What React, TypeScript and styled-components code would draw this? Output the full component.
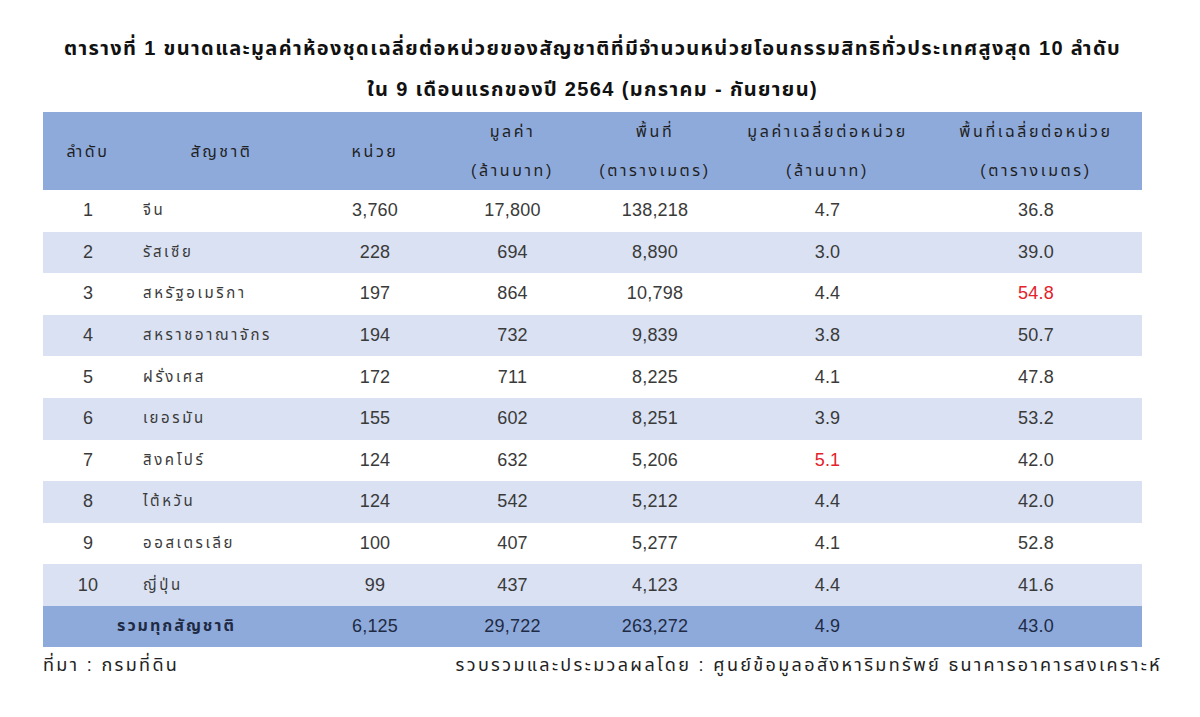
import React from "react";
import styled, { createGlobalStyle } from "styled-components";

const GlobalStyle = createGlobalStyle`
  html, body {
    margin: 0;
    padding: 0;
    background: #ffffff;
  }
  body {
    font-family: "Liberation Sans", "Noto Sans Thai", "DejaVu Sans", sans-serif;
    color: #333333;
  }
`;

interface Row {
  rank: number;
  name: string;
  units: string;
  value: string;
  area: string;
  avgValue: string;
  avgArea: string;
  hotValue?: boolean;
  hotArea?: boolean;
}

const rows: Row[] = [
  { rank: 1, name: "จีน", units: "3,760", value: "17,800", area: "138,218", avgValue: "4.7", avgArea: "36.8" },
  { rank: 2, name: "รัสเซีย", units: "228", value: "694", area: "8,890", avgValue: "3.0", avgArea: "39.0" },
  { rank: 3, name: "สหรัฐอเมริกา", units: "197", value: "864", area: "10,798", avgValue: "4.4", avgArea: "54.8", hotArea: true },
  { rank: 4, name: "สหราชอาณาจักร", units: "194", value: "732", area: "9,839", avgValue: "3.8", avgArea: "50.7" },
  { rank: 5, name: "ฝรั่งเศส", units: "172", value: "711", area: "8,225", avgValue: "4.1", avgArea: "47.8" },
  { rank: 6, name: "เยอรมัน", units: "155", value: "602", area: "8,251", avgValue: "3.9", avgArea: "53.2" },
  { rank: 7, name: "สิงคโปร์", units: "124", value: "632", area: "5,206", avgValue: "5.1", avgArea: "42.0", hotValue: true },
  { rank: 8, name: "ไต้หวัน", units: "124", value: "542", area: "5,212", avgValue: "4.4", avgArea: "42.0" },
  { rank: 9, name: "ออสเตรเลีย", units: "100", value: "407", area: "5,277", avgValue: "4.1", avgArea: "52.8" },
  { rank: 10, name: "ญี่ปุ่น", units: "99", value: "437", area: "4,123", avgValue: "4.4", avgArea: "41.6" },
];

const Page = styled.div`
  width: 1200px;
  height: 717px;
  padding: 28px 0 0 43px;
  box-sizing: border-box;
`;

const Title = styled.h1`
  margin: 0 0 2px;
  width: 1099px;
  text-align: center;
  font-size: 20px;
  font-weight: 700;
  line-height: 41px;
  letter-spacing: 1.35px;
  color: #111111;
`;

const Table = styled.table`
  width: 1099px;
  border-collapse: collapse;
  table-layout: fixed;
  font-size: 18px;
`;

const HeadRow = styled.tr`
  background: #8eaadb;
  height: 78px;
`;

const HeadCell = styled.th`
  font-weight: 400;
  font-size: 16px;
  color: #1f1f1f;
  text-align: center;
  vertical-align: middle;
  padding: 0;
  line-height: 39px;
  letter-spacing: 2.6px;
`;

const BodyRow = styled.tr<{ $shaded: boolean }>`
  background: ${(p) => (p.$shaded ? "#d9e1f2" : "#ffffff")};
  height: 41.6px;
`;

const Cell = styled.td<{ $left?: boolean; $hot?: boolean }>`
  text-align: ${(p) => (p.$left ? "left" : "center")};
  padding: 0 0 0 ${(p) => (p.$left ? "10px" : "0")};
  color: ${(p) => (p.$hot ? "#e3222b" : "#3a3a3a")};
  letter-spacing: ${(p) => (p.$left ? "2.6px" : "0.2px")};
  font-size: ${(p) => (p.$left ? "15px" : "18px")};
  vertical-align: middle;
`;

const TotalRow = styled.tr`
  background: #8eaadb;
  height: 41px;
`;

const TotalCell = styled.td<{ $label?: boolean }>`
  text-align: center;
  color: #1f2a44;
  font-weight: ${(p) => (p.$label ? 700 : 400)};
  font-size: ${(p) => (p.$label ? "16px" : "18px")};
  letter-spacing: ${(p) => (p.$label ? "2px" : "0.2px")};
  vertical-align: middle;
`;

const Footer = styled.div`
  width: 1119px;
  display: flex;
  justify-content: space-between;
  font-size: 18px;
  letter-spacing: 2.35px;
  color: #222222;
  line-height: 36px;
`;

const widths = [90, 177, 130, 145, 140, 205, 212];

export default function App() {
  return (
    <>
      <GlobalStyle />
      <Page>
        <Title>
          ตารางที่ 1 ขนาดและมูลค่าห้องชุดเฉลี่ยต่อหน่วยของสัญชาติที่มีจำนวนหน่วยโอนกรรมสิทธิทั่วประเทศสูงสุด 10 ลำดับ
          <br />
          ใน 9 เดือนแรกของปี 2564 (มกราคม - กันยายน)
        </Title>
        <Table>
          <colgroup>
            {widths.map((w, i) => (
              <col key={i} style={{ width: w }} />
            ))}
          </colgroup>
          <thead>
            <HeadRow>
              <HeadCell>ลำดับ</HeadCell>
              <HeadCell>สัญชาติ</HeadCell>
              <HeadCell>หน่วย</HeadCell>
              <HeadCell>
                มูลค่า
                <br />
                (ล้านบาท)
              </HeadCell>
              <HeadCell>
                พื้นที่
                <br />
                (ตารางเมตร)
              </HeadCell>
              <HeadCell>
                มูลค่าเฉลี่ยต่อหน่วย
                <br />
                (ล้านบาท)
              </HeadCell>
              <HeadCell>
                พื้นที่เฉลี่ยต่อหน่วย
                <br />
                (ตารางเมตร)
              </HeadCell>
            </HeadRow>
          </thead>
          <tbody>
            {rows.map((r) => (
              <BodyRow key={r.rank} $shaded={r.rank % 2 === 0}>
                <Cell>{r.rank}</Cell>
                <Cell $left>{r.name}</Cell>
                <Cell>{r.units}</Cell>
                <Cell>{r.value}</Cell>
                <Cell>{r.area}</Cell>
                <Cell $hot={r.hotValue}>{r.avgValue}</Cell>
                <Cell $hot={r.hotArea}>{r.avgArea}</Cell>
              </BodyRow>
            ))}
            <TotalRow>
              <TotalCell colSpan={2} $label>
                รวมทุกสัญชาติ
              </TotalCell>
              <TotalCell>6,125</TotalCell>
              <TotalCell>29,722</TotalCell>
              <TotalCell>263,272</TotalCell>
              <TotalCell>4.9</TotalCell>
              <TotalCell>43.0</TotalCell>
            </TotalRow>
          </tbody>
        </Table>
        <Footer>
          <span>ที่มา : กรมที่ดิน</span>
          <span>รวบรวมและประมวลผลโดย : ศูนย์ข้อมูลอสังหาริมทรัพย์ ธนาคารอาคารสงเคราะห์</span>
        </Footer>
      </Page>
    </>
  );
}
